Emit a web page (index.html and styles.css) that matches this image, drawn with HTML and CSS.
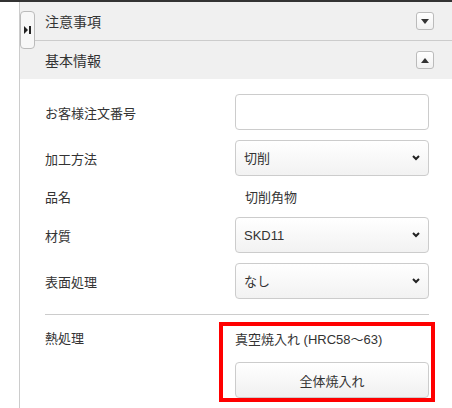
FILE: index.html
```html
<!DOCTYPE html>
<html lang="ja">
<head>
  <meta charset="UTF-8">
  <title>基本情報</title>
  <link rel="stylesheet" href="styles.css">
</head>
<body>
  <div class="topbar"></div>
  <div class="layout">
    <div class="side"></div>
    <div class="main">
      <button class="side-toggle" title="サイドバー">
        <svg width="7" height="8" viewBox="0 0 7 8"><polygon points="0,0 4,4 0,8" fill="#222"/><rect x="5" y="0" width="2" height="8" fill="#222"/></svg>
      </button>

      <div class="section-head">
        <span>注意事項</span>
        <button class="head-btn">
          <svg width="8" height="5" viewBox="0 0 8 5"><polygon points="0,0 8,0 4,5" fill="#333"/></svg>
        </button>
      </div>
      <div class="section-head open">
        <span>基本情報</span>
        <button class="head-btn">
          <svg width="8" height="5" viewBox="0 0 8 5"><polygon points="0,5 8,5 4,0" fill="#333"/></svg>
        </button>
      </div>

      <div class="content">
        <div class="rows">
          <div class="row">
            <label class="row-label" for="order">お客様注文番号</label>
            <div class="field"><input type="text" id="order"></div>
          </div>
          <div class="row">
            <label class="row-label" for="method">加工方法</label>
            <div class="field select-wrap">
              <select id="method"><option>切削</option></select>
              <svg class="chev" width="8" height="6" viewBox="0 0 8 6"><polyline points="1,1 4,4 7,1" fill="none" stroke="#222" stroke-width="2"/></svg>
            </div>
          </div>
          <div class="row row-text">
            <span class="row-label">品名</span>
            <div class="field static">切削角物</div>
          </div>
          <div class="row">
            <label class="row-label" for="material">材質</label>
            <div class="field select-wrap">
              <select id="material"><option>SKD11</option></select>
              <svg class="chev" width="8" height="6" viewBox="0 0 8 6"><polyline points="1,1 4,4 7,1" fill="none" stroke="#222" stroke-width="2"/></svg>
            </div>
          </div>
          <div class="row">
            <label class="row-label" for="surface">表面処理</label>
            <div class="field select-wrap">
              <select id="surface"><option>なし</option></select>
              <svg class="chev" width="8" height="6" viewBox="0 0 8 6"><polyline points="1,1 4,4 7,1" fill="none" stroke="#222" stroke-width="2"/></svg>
            </div>
          </div>
        </div>

        <div class="row heat">
          <span class="row-label">熱処理</span>
          <div class="field heat-field">
            <div class="heat-value">真空焼入れ (HRC58～63)</div>
            <button class="btn">全体焼入れ</button>
            <div class="highlight"></div>
          </div>
        </div>
      </div>
    </div>
  </div>
</body>
</html>
```

FILE: styles.css
```css
* {
  box-sizing: border-box;
}
body {
  margin: 0;
  font-family: 'Liberation Sans', 'Noto Sans CJK JP', sans-serif;
  font-size: 13px;
  color: #333;
  background: #fff;
}
.topbar {
  height: 2px;
  background: #333;
}
.layout {
  display: flex;
  height: 406px;
}
.side {
  width: 20px;
  border-right: 1px solid #ccc;
}
.main {
  flex: 1;
  position: relative;
}
.side-toggle {
  position: absolute;
  left: 0;
  top: 9px;
  width: 15px;
  height: 38px;
  padding: 0;
  border: 1px solid #bbb;
  border-radius: 4px;
  background: #f7f7f7;
  display: flex;
  align-items: center;
  justify-content: center;
}
.section-head {
  height: 39px;
  background: #f0f0f0;
  border-bottom: 1px solid #ccc;
  display: flex;
  align-items: center;
  justify-content: space-between;
  padding: 0 18px 0 25px;
  font-size: 14px;
}
.section-head.open {
  height: 38px;
  border-bottom: none;
}
.head-btn {
  width: 18px;
  height: 18px;
  padding: 0;
  border: 1px solid #bbb;
  border-radius: 3px;
  background: linear-gradient(#fff, #f1f1f1);
  display: flex;
  align-items: center;
  justify-content: center;
}
.content {
  padding: 15px 23px 0 25px;
}
.rows {
  display: flex;
  flex-direction: column;
  gap: 10px;
  padding-bottom: 15px;
  border-bottom: 1px solid #ccc;
}
.row {
  display: flex;
  align-items: center;
}
.row-label {
  width: 190px;
  flex-shrink: 0;
}
.field {
  width: 194px;
}
.row-text {
  height: 21px;
}
.static {
  padding-left: 10px;
}
input[type="text"],
select {
  width: 100%;
  height: 36px;
  border: 1px solid #ccc;
  border-radius: 4px;
  font-family: inherit;
  font-size: 13px;
  color: #333;
}
input[type="text"] {
  background: #fff;
}
select {
  appearance: none;
  padding: 0 24px 0 8px;
  background: linear-gradient(#fff, #f2f2f2);
}
.select-wrap {
  position: relative;
}
.chev {
  position: absolute;
  right: 9px;
  top: 15px;
  pointer-events: none;
}
.heat {
  align-items: flex-start;
  padding-top: 15px;
}
.heat .row-label {
  line-height: 16px;
  padding-top: 1px;
}
.heat-field {
  position: relative;
}
.heat-value {
  line-height: 20px;
}
.btn {
  display: block;
  width: 100%;
  height: 36px;
  margin-top: 12px;
  border: 1px solid #ccc;
  border-radius: 4px;
  background: linear-gradient(#fff, #f0f0f0);
  font-family: inherit;
  font-size: 13px;
  color: #333;
}
.highlight {
  position: absolute;
  left: -16px;
  right: -6px;
  top: -8px;
  bottom: -4px;
  border: 4px solid #f00;
  pointer-events: none;
}
```
